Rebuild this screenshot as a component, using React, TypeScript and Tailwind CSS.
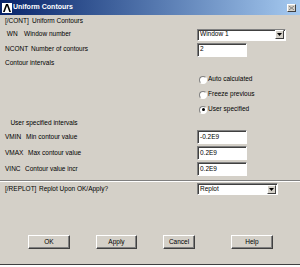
import React from "react";

const sunken =
  "bg-white border border-t-[#808080] border-l-[#808080] border-b-white border-r-white shadow-[inset_1px_1px_0_#404040]";

const Dropdown = ({ value, width }: { value: string; width: string }) => (
  <div className={`${sunken} ${width} h-[12px] flex items-center pl-[2px]`}>
    <span className="flex-1 leading-none">{value}</span>
    <div className="w-[9px] h-[9px] mr-[1px] bg-[#d4d0c8] border border-t-white border-l-white border-b-[#404040] border-r-[#404040] flex items-center justify-center">
      <svg width="5" height="3" viewBox="0 0 5 3">
        <path d="M0 0h5L2.5 3z" fill="#000" />
      </svg>
    </div>
  </div>
);

const TextBox = ({ value }: { value: string }) => (
  <div className={`${sunken} w-[50px] h-[14px] flex items-center pl-[2px] leading-none`}>
    {value}
  </div>
);

const Radio = ({ label, checked }: { label: string; checked?: boolean }) => (
  <div className="h-[15px] flex items-center pl-[2px] gap-[1px]">
    <div className="w-[8px] h-[8px] rounded-full bg-white border border-t-[#808080] border-l-[#808080] border-b-white border-r-white flex items-center justify-center">
      {checked && <div className="w-[3px] h-[3px] rounded-full bg-black" />}
    </div>
    <span className="leading-none">{label}</span>
  </div>
);

const Button = ({ label, width }: { label: string; width: string }) => (
  <div
    className={`${width} h-[14px] flex items-center justify-center bg-[#d4d0c8] border border-t-white border-l-white border-b-[#404040] border-r-[#404040] shadow-[inset_-1px_-1px_0_#808080]`}
  >
    {label}
  </div>
);

// label = command code + description, description starts after a code column of given width
const Row = ({
  code,
  codeW,
  desc,
  h,
  children,
}: {
  code?: string;
  codeW?: string;
  desc?: string;
  h: string;
  children?: React.ReactNode;
}) => (
  <div className={`flex items-center ${h}`}>
    <div className="w-[197px] pl-[5px] flex whitespace-pre leading-none">
      {code && <span className={`${codeW} shrink-0`}>{code}</span>}
      {desc && <span>{desc}</span>}
    </div>
    <div className="flex-1">{children}</div>
  </div>
);

export default function App() {
  return (
    <div
      className="w-[300px] h-[265px] bg-[#d4d0c8] text-[6.5px] text-black flex flex-col border-b border-b-[#404040]"
      style={{ fontFamily: '"Liberation Sans", Arial, sans-serif' }}
    >
      {/* Title bar */}
      <div className="h-[15px] flex items-center bg-gradient-to-r from-[#0a246a] to-[#a6caf0] pl-[2px] pr-[4px]">
        <svg width="10" height="10" viewBox="0 0 10 10">
          <rect width="10" height="10" fill="#fff" />
          <path d="M1 9L4 1h2l3 8H7.3L5 2.8 2.7 9z" fill="#000" />
        </svg>
        <span className="ml-[1px] flex-1 text-white font-bold text-[7px]">Uniform Contours</span>
        <div className="w-[9px] h-[8px] bg-[#d4d0c8] border border-t-white border-l-white border-b-[#404040] border-r-[#404040] flex items-center justify-center">
          <svg width="5" height="4" viewBox="0 0 5 4">
            <path d="M0 0l5 4M5 0L0 4" stroke="#808080" strokeWidth="1" />
          </svg>
        </div>
      </div>

      <Row h="h-[12px]" code="[/CONT]" codeW="w-[27px]" desc="Uniform Contours" />
      <Row h="h-[15px]" code=" WN" codeW="w-[19px]" desc="Window number">
        <Dropdown value="Window 1" width="w-[89px]" />
      </Row>
      <Row h="h-[15px]" code="NCONT" codeW="w-[26px]" desc="Number of contours">
        <TextBox value="2" />
      </Row>
      <Row h="h-[13px]" desc="Contour intervals" />
      <div className="h-[2px]" />
      <Row h="h-[15px]">
        <Radio label="Auto calculated" />
      </Row>
      <Row h="h-[15px]">
        <Radio label="Freeze previous" />
      </Row>
      <Row h="h-[15px]">
        <Radio label="User specified" checked />
      </Row>
      <Row h="h-[12px]" desc="   User specified intervals" />
      <Row h="h-[16px]" code="VMIN" codeW="w-[21px]" desc="Min contour value">
        <TextBox value="-0.2E9" />
      </Row>
      <Row h="h-[16px]" code="VMAX" codeW="w-[23px]" desc="Max contour value">
        <TextBox value="0.2E9" />
      </Row>
      <Row h="h-[16px]" code="VINC" codeW="w-[20px]" desc="Contour value incr">
        <TextBox value="0.2E9" />
      </Row>

      <div className="mt-[3px] h-[2px] border-t border-t-[#808080] border-b border-b-white" />

      <Row h="h-[14px]" code="[/REPLOT]" codeW="w-[34px]" desc="Replot Upon OK/Apply?">
        <Dropdown value="Replot" width="w-[81px]" />
      </Row>

      <div className="flex-1" />

      <div className="flex items-center h-[14px] mb-[15px] pl-[28px]">
        <Button label="OK" width="w-[42px]" />
        <div className="w-[26px]" />
        <Button label="Apply" width="w-[41px]" />
        <div className="w-[26px]" />
        <Button label="Cancel" width="w-[32px]" />
        <div className="w-[36px]" />
        <Button label="Help" width="w-[42px]" />
      </div>
    </div>
  );
}
